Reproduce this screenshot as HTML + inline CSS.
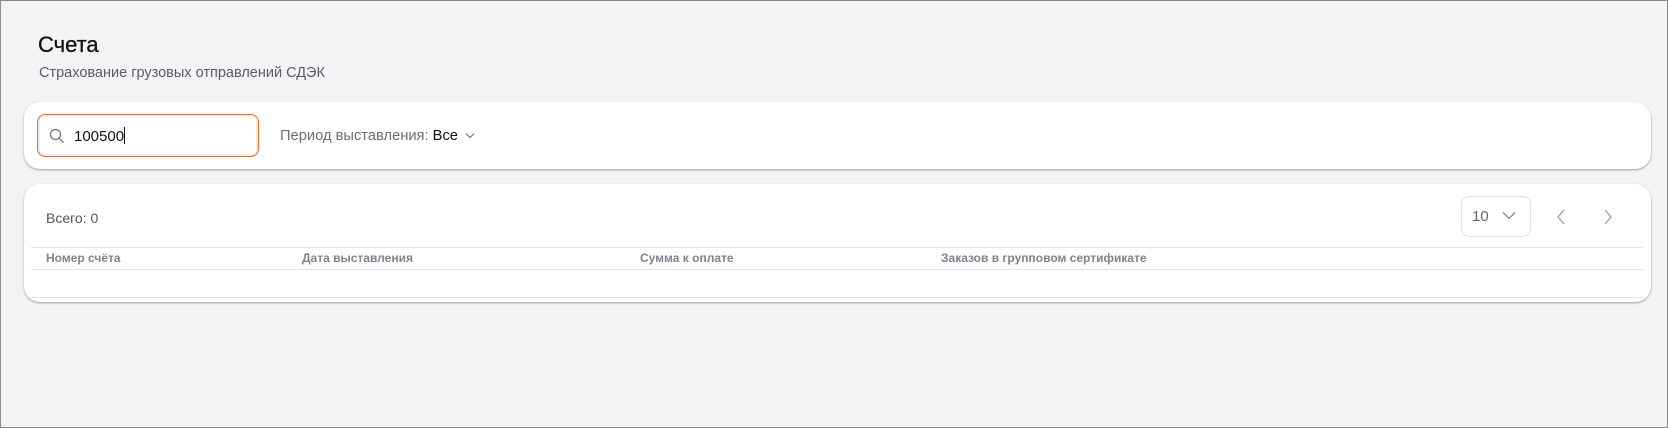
<!DOCTYPE html>
<html><head><meta charset="utf-8"><style>
*{box-sizing:border-box;margin:0;padding:0}
html,body{width:1668px;height:428px;overflow:hidden}
body{background:#f2f3f5;font-family:"Liberation Sans",sans-serif;position:relative;border:1px solid #8a8a8a;}
.a{position:absolute}
.card{position:absolute;background:#fff;border-radius:16px;box-shadow:0 1px 2px rgba(0,0,0,.35)}
.hd{position:absolute;top:250px;font-size:12px;font-weight:bold;color:#80838f}
.ln{position:absolute;left:30px;width:1613px;height:1px;background:#e3e4e8}
</style></head><body>
<div class="a" style="left:37px;top:31px;font-size:22px;color:#111;-webkit-text-stroke:0.3px #111">Счета</div>
<div class="a" style="left:38px;top:64px;font-size:14.5px;color:#5a5d66">Страхование грузовых отправлений СДЭК</div>
<div class="card" style="left:23px;top:101px;width:1627px;height:67px"></div>
<div class="a" style="left:36px;top:113px;width:222px;height:43px;border:1.5px solid #f36c21;border-radius:8px;box-shadow:inset 0 0 0 1.5px #e6e6ea"></div>
<svg class="a" style="left:48px;top:127px" width="16" height="16" viewBox="0 0 16 16"><circle cx="6.5" cy="6.5" r="5" fill="none" stroke="#777" stroke-width="1.3"/><path d="M10.2 10.2L14.5 14.5" stroke="#777" stroke-width="1.3"/></svg>
<div class="a" style="left:73px;top:126px;font-size:15px;color:#111">100500<span style="display:inline-block;width:1px;height:17px;background:#111;vertical-align:-3px"></span></div>
<div class="a" style="left:279px;top:127px;font-size:14.7px;color:#6b6e79">Период выставления: <span style="color:#111">Все</span></div>
<svg class="a" style="left:464px;top:131px" width="10" height="7" viewBox="0 0 10 7"><path d="M1 1.5L5 5.5L9 1.5" fill="none" stroke="#777" stroke-width="1.2"/></svg>
<div class="card" style="left:23px;top:183px;width:1627px;height:118px"></div>
<div class="a" style="left:45px;top:209px;font-size:14px;color:#555">Всего: 0</div>
<div class="a" style="left:1460px;top:195px;width:70px;height:41px;border:1px solid #e2e3e8;border-radius:8px"></div>
<div class="a" style="left:1471px;top:207px;font-size:15px;color:#666">10</div>
<svg class="a" style="left:1501px;top:210px" width="14" height="9" viewBox="0 0 14 9"><path d="M1 1.5L7 7.5L13 1.5" fill="none" stroke="#888" stroke-width="1.3"/></svg>
<svg class="a" style="left:1555px;top:208px" width="10" height="16" viewBox="0 0 10 16"><path d="M8 1L2 8L8 15" fill="none" stroke="#999" stroke-width="1.2"/></svg>
<svg class="a" style="left:1602px;top:208px" width="10" height="16" viewBox="0 0 10 16"><path d="M2 1L8 8L2 15" fill="none" stroke="#999" stroke-width="1.2"/></svg>
<div class="ln" style="top:246px"></div>
<div class="hd" style="left:45px">Номер счёта</div>
<div class="hd" style="left:301px">Дата выставления</div>
<div class="hd" style="left:639px">Сумма к оплате</div>
<div class="hd" style="left:940px">Заказов в групповом сертификате</div>
<div class="ln" style="top:268px"></div>
<div class="ln" style="top:296px"></div>
</body></html>
